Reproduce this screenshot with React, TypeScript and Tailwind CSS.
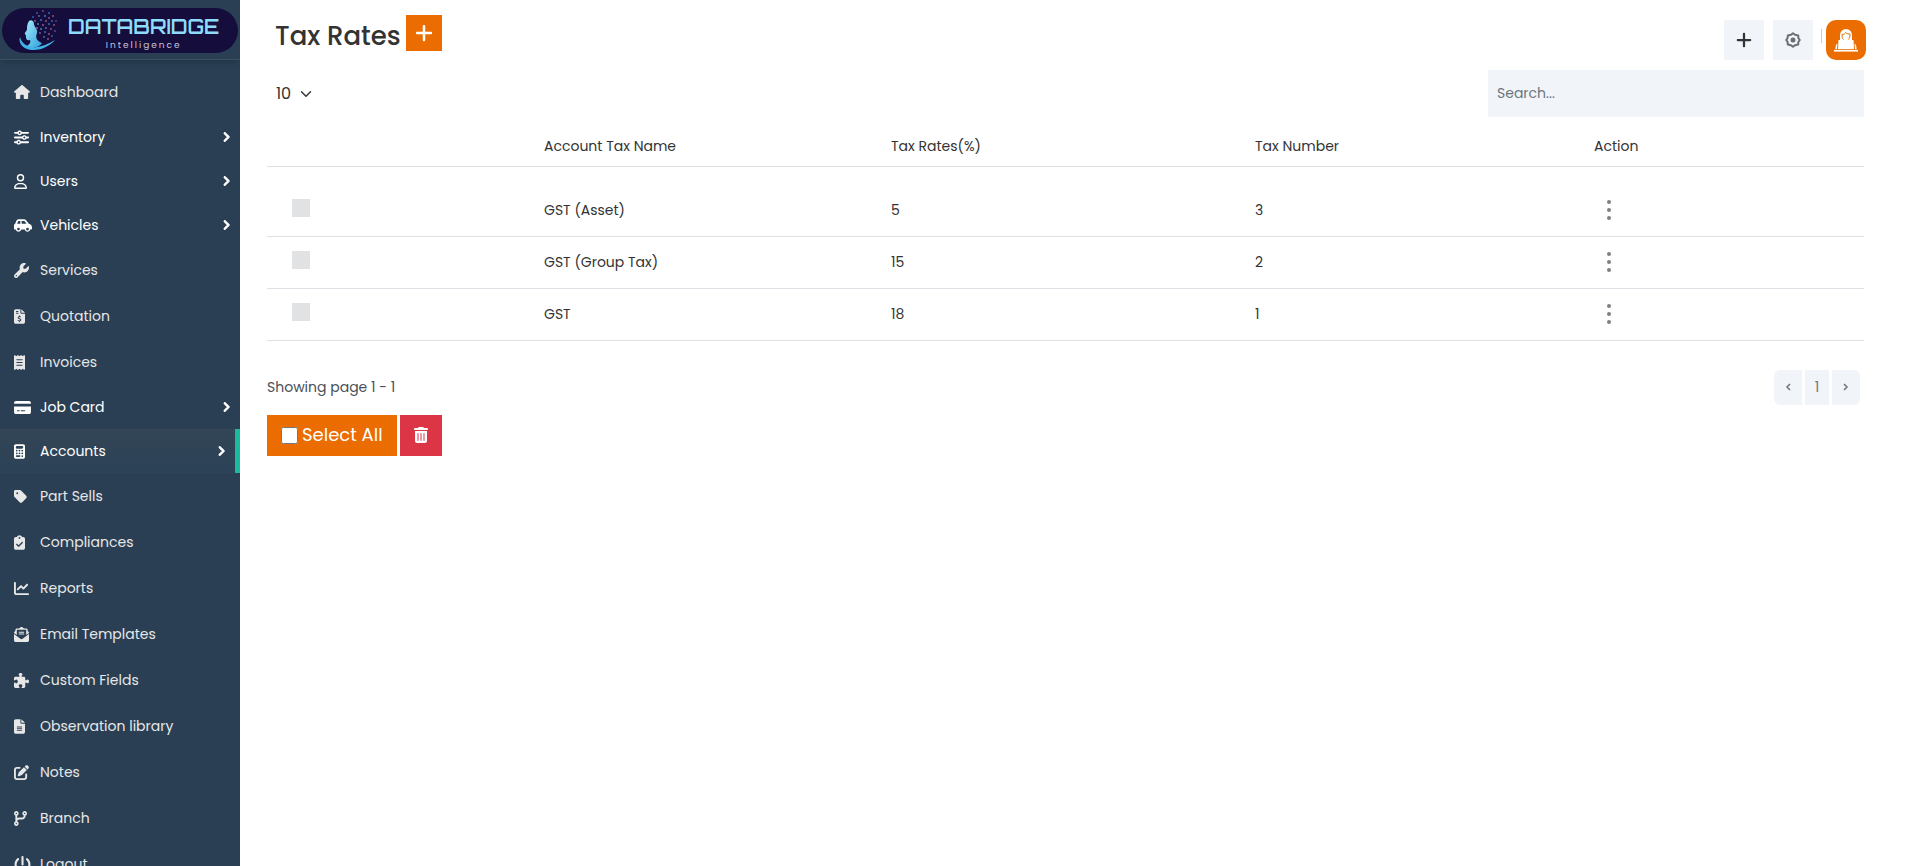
import { useState } from 'react';
import type { IconType } from 'react-icons';
import {
  FaHouse, FaSliders, FaRegUser, FaCarSide, FaWrench, FaFileInvoiceDollar, FaReceipt, FaCreditCard,
  FaCalculator, FaTag, FaClipboardCheck, FaChartLine, FaEnvelopeOpenText, FaPuzzlePiece, FaFileLines,
  FaPenToSquare, FaCodeBranch, FaPowerOff, FaChevronRight, FaPlus, FaTrashCan,
} from 'react-icons/fa6';

interface NavItem {
  label: string;
  icon: IconType;
  size: string;
  group?: boolean;
  active?: boolean;
}

const NAV: NavItem[] = [
  { label: 'Dashboard', icon: FaHouse, size: 'w-4 h-3.5' },
  { label: 'Inventory', icon: FaSliders, size: 'w-[15px] h-[15px]', group: true },
  { label: 'Users', icon: FaRegUser, size: 'w-[13px] h-[15px]', group: true },
  { label: 'Vehicles', icon: FaCarSide, size: 'w-[18px] h-[15px]', group: true },
  { label: 'Services', icon: FaWrench, size: 'w-[15px] h-[15px]' },
  { label: 'Quotation', icon: FaFileInvoiceDollar, size: 'w-[11px] h-[15px]' },
  { label: 'Invoices', icon: FaReceipt, size: 'w-[11px] h-[15px]' },
  { label: 'Job Card', icon: FaCreditCard, size: 'w-[17px] h-[15px]', group: true },
  { label: 'Accounts', icon: FaCalculator, size: 'w-[11px] h-[15px]', group: true, active: true },
  { label: 'Part Sells', icon: FaTag, size: 'w-[13px] h-[15px]' },
  { label: 'Compliances', icon: FaClipboardCheck, size: 'w-[11px] h-[15px]' },
  { label: 'Reports', icon: FaChartLine, size: 'w-[15px] h-[15px]' },
  { label: 'Email Templates', icon: FaEnvelopeOpenText, size: 'w-[15px] h-[15px]' },
  { label: 'Custom Fields', icon: FaPuzzlePiece, size: 'w-[15px] h-[15px]' },
  { label: 'Observation library', icon: FaFileLines, size: 'w-[11px] h-[15px]' },
  { label: 'Notes', icon: FaPenToSquare, size: 'w-[15px] h-[15px]' },
  { label: 'Branch', icon: FaCodeBranch, size: 'w-[13px] h-[15px]' },
  { label: 'Logout', icon: FaPowerOff, size: 'w-[17px] h-[17px]' },
];

const TAXES = [
  { name: 'GST (Asset)', rate: 5, number: 3 },
  { name: 'GST (Group Tax)', rate: 15, number: 2 },
  { name: 'GST', rate: 18, number: 1 },
];

// Scattered dots behind the head in the logo: x, y, colour
const SPARKS: [number, number, string][] = [
  [19, 3, '#3f5fa8'], [25, 1, '#7a4f9c'], [31, 3, '#3f6fc0'], [35, 6, '#b0527f'],
  [15, 7, '#3d63b5'], [21, 6, '#8a5aa8'], [27, 6, '#4d7fd0'], [31, 8, '#94508f'],
  [17, 11, '#9a5c93'], [23, 10, '#4a78c8'], [28, 11, '#a3567f'], [34, 11, '#3e63ad'],
  [20, 14, '#4c86d8'], [25, 15, '#9c5da0'], [31, 14, '#4670c0'], [36, 15, '#a04f86'],
  [19, 18, '#a0609a'], [23, 19, '#4b82cf'], [28, 18, '#5b6fc0'], [33, 19, '#974f8c'],
  [22, 23, '#8e5aa5'], [27, 22, '#3f74c8'], [31, 24, '#a8557f'], [37, 21, '#6c4a9c'],
  [26, 27, '#4a73bb'], [30, 29, '#9a5590'], [34, 26, '#4c63b0'], [38, 11, '#5c3f8c'],
];

function Logo() {
  return (
    <a href="#" className="flex h-[45px] items-center rounded-full bg-[#150d3c]">
      <svg className="ml-4 h-[42px] w-10 shrink-0" viewBox="0 0 40 42" aria-hidden="true">
        <defs>
          <linearGradient id="face" x1="0" y1="0" x2="1" y2="1">
            <stop offset="0" stopColor="#a5ecfd" />
            <stop offset="1" stopColor="#2ea0dc" />
          </linearGradient>
        </defs>
        {SPARKS.map(([x, y, c]) => (
          <circle key={`${x}-${y}`} cx={x} cy={y} r="0.9" fill={c} />
        ))}
        <path d="M11 11C9 14 9 17 9 19C9 21 6 23 7 24C8 25 8 26 8 27C8 29 9 31 12 30C13 32 12 34 9 36C15 39 22 37 24 33C19 31 17 28 19 23C20 19 16 17 16 14C16 11 13 9 11 11Z" fill="url(#face)" />
        <path d="M2 27C0 32 4 39 13 40C23 41 33 35 37 30C30 34 22 38 14 37C7 36 3 32 2 27Z" fill="#3fb4ea" />
      </svg>
      <div className="ml-2.5 flex flex-col pt-1">
        <span className="font-[Orbitron,Poppins,sans-serif] text-[20px] leading-6 font-semibold text-[#8edcfb]">DATABRIDGE</span>
        <span className="self-center font-[Poppins,sans-serif] text-[9px] leading-3 tracking-[2px] text-[#c9c4dc]">Intelligence</span>
      </div>
    </a>
  );
}

function Sidebar() {
  return (
    <aside className="h-screen w-60 shrink-0 overflow-hidden bg-[#2a3f54]">
      <div className="h-[60px] border-b border-[#3e5163] px-0.5 pt-2 shadow-md">
        <Logo />
      </div>
      <nav className="pt-[9px]">
        <ul>
          {NAV.map(({ label, icon: Icon, size, group, active }) => (
            <li key={label}>
              <a
                href="#"
                className={`flex items-center pl-3.5 text-sm ${group ? 'h-11 text-white' : 'h-[46px] text-[#e7e7e7]'} ${
                  active ? 'border-r-5 border-[#1abb9c] bg-linear-to-b from-[#334556] to-[#2c4257]' : ''
                }`}
              >
                <span className="w-[26px] shrink-0">
                  <Icon className={size} />
                </span>
                {label}
                {group && <FaChevronRight className="mr-[9px] ml-auto size-2.5" strokeWidth={60} stroke="currentColor" />}
              </a>
            </li>
          ))}
        </ul>
      </nav>
    </aside>
  );
}

function GearIcon() {
  return (
    <svg width="16" height="16" viewBox="0 0 16 16" fill="none" stroke="#6b6f74" strokeWidth="2">
      <path d="M8 1.2L10 2.8L13.2 3.4L13.4 6.2L14.8 8L13.4 9.8L13.2 12.6L10 13.2L8 14.8L6 13.2L2.8 12.6L2.6 9.8L1.2 8L2.6 6.2L2.8 3.4L6 2.8Z" strokeLinejoin="round" />
      <circle cx="8" cy="8" r="1.5" fill="#6b6f74" />
    </svg>
  );
}

function AvatarIcon() {
  return (
    <svg width="24" height="23" viewBox="0 0 24 23" fill="#fff">
      <path d="M6 11V6A6 6 0 0 1 18 6V11Z" />
      <path d="M8 5.500C10 5.500 11 4.500 11.500 3.500C12.500 4.500 14 5 16 5C16 8 15.500 9 14.500 10.500M8 5.500C8 8 8.500 9.500 9.500 10.500" fill="none" stroke="#eb6c00" />
      <path d="M4.500 11H19.500L20 20H4Z" />
      <path d="M3.500 14.500L3 20H1.500C1.500 17 2 15 3.500 14.500ZM20.500 14.500L21 20H22.500C22.500 17 22 15 20.500 14.500Z" />
      <path d="M0 20.800H24V22.600H0Z" />
    </svg>
  );
}

export default function App() {
  const [search, setSearch] = useState('');
  const [selected, setSelected] = useState<number[]>([]);

  const toggle = (n: number) =>
    setSelected((prev) => (prev.includes(n) ? prev.filter((x) => x !== n) : [...prev, n]));

  const rows = TAXES.filter((t) => t.name.toLowerCase().includes(search.toLowerCase()));

  return (
    <div className="flex h-screen overflow-hidden bg-white font-[Poppins,Inter,sans-serif] text-[#333]">
      <Sidebar />

      <main className="min-w-0 flex-1 pr-[55px] pl-[27px]">
        {/* Title bar */}
        <header className="flex h-[70px] items-start justify-between pl-2">
          <div className="flex items-start gap-[5px] pt-[15px]">
            <h1 className="pt-[3px] text-[26px] leading-9 font-medium">Tax Rates</h1>
            <button aria-label="Add tax rate" className="flex size-9 items-center justify-center bg-[#eb6c00] text-white">
              <FaPlus className="size-5" />
            </button>
          </div>
          <div className="-mr-0.5 flex items-center pt-5">
            <button aria-label="Create" className="flex size-10 items-center justify-center bg-[#f1f5fa]">
              <FaPlus className="size-[18px]" />
            </button>
            <button aria-label="Settings" className="ml-[9px] flex size-10 items-center justify-center bg-[#f1f5fa]">
              <GearIcon />
            </button>
            <span className="mb-2 ml-2 h-3.5 w-px bg-[#ccc]" />
            <button aria-label="Profile" className="ml-1 flex size-10 items-center justify-center rounded-[10px] bg-[#eb6c00]">
              <AvatarIcon />
            </button>
          </div>
        </header>

        {/* Table controls */}
        <div className="flex items-center justify-between">
          <div className="relative ml-[9px] flex items-center">
            <select aria-label="Rows per page" className="w-10 appearance-none bg-transparent text-base">
              <option>10</option>
              <option>25</option>
              <option>50</option>
            </select>
            <svg className="pointer-events-none absolute right-1 h-3 w-3" viewBox="0 0 16 16" fill="none" stroke="#343a40" strokeWidth="2" strokeLinecap="round" strokeLinejoin="round">
              <path d="m2 5 6 6 6-6" />
            </svg>
          </div>
          <input
            type="search"
            aria-label="Search"
            placeholder="Search..."
            value={search}
            onChange={(e) => setSearch(e.target.value)}
            className="h-[47px] w-[376px] bg-[#f1f5fa] px-[9px] text-sm outline-none placeholder:text-[#6c757d]"
          />
        </div>

        <table className="w-full table-fixed border-collapse text-left text-sm">
          <colgroup>
            <col className="w-[269px]" />
            <col className="w-[347px]" />
            <col className="w-[364px]" />
            <col className="w-[339px]" />
            <col className="w-[278px]" />
          </colgroup>
          <thead>
            <tr className="h-[49px] border-b border-[#dee0e6]">
              <th aria-label="Select" />
              <th className="pt-2.5 pl-2 font-normal">Account Tax Name</th>
              <th className="pt-2.5 pl-2 font-normal">Tax Rates(%)</th>
              <th className="pt-2.5 pl-2 font-normal">Tax Number</th>
              <th className="pt-2.5 pl-2 font-normal">Action</th>
            </tr>
          </thead>
          <tbody>
            <tr className="h-[18px]" aria-hidden="true" />
            {rows.map((t) => (
              <tr key={t.number} className="h-[52px] border-b border-[#dee0e6]">
                <td className="pb-1 pl-[25px]">
                  <input
                    type="checkbox"
                    aria-label={`Select ${t.name}`}
                    checked={selected.includes(t.number)}
                    onChange={() => toggle(t.number)}
                    className="block size-[18px] appearance-none bg-[#e1e2e4] checked:bg-[#eb6c00]"
                  />
                </td>
                <td className="pl-2">{t.name}</td>
                <td className="pl-2">{t.rate}</td>
                <td className="pl-2">{t.number}</td>
                <td className="pl-[19px]">
                  <button aria-label={`Actions for ${t.name}`} className="flex flex-col gap-1 p-0.5">
                    <span className="size-1 rounded-full bg-[#808080]" />
                    <span className="size-1 rounded-full bg-[#808080]" />
                    <span className="size-1 rounded-full bg-[#808080]" />
                  </button>
                </td>
              </tr>
            ))}
          </tbody>
        </table>

        {/* Pagination */}
        <div className="mt-[29px] flex items-center justify-between pr-1">
          <p className="text-sm text-[#495057]">Showing page 1 - 1</p>
          <div className="flex gap-[3px] text-sm text-[#6c757d]">
            <button aria-label="Previous page" className="flex h-[35px] w-7 items-center justify-center rounded-l-md bg-[#f1f5fa]">
              <svg width="6" height="8" viewBox="0 0 6 8" fill="none" stroke="currentColor" strokeWidth="1.500"><path d="M5 1 2 4l3 3" /></svg>
            </button>
            <button className="h-[35px] w-6 bg-[#f1f5fa]">1</button>
            <button aria-label="Next page" className="flex h-[35px] w-7 items-center justify-center rounded-r-md bg-[#f1f5fa]">
              <svg width="6" height="8" viewBox="0 0 6 8" fill="none" stroke="currentColor" strokeWidth="1.500"><path d="m1 1 3 3-3 3" /></svg>
            </button>
          </div>
        </div>

        <div className="mt-2.5 flex gap-[3px] text-white">
          <label className="flex h-[41px] items-center gap-1 bg-[#eb6c00] px-3.5 text-lg">
            <input
              type="checkbox"
              checked={selected.length === TAXES.length}
              onChange={(e) => setSelected(e.target.checked ? TAXES.map((t) => t.number) : [])}
              className="size-[17px]"
            />
            Select All
          </label>
          <button aria-label="Delete selected" className="flex h-[41px] w-[42px] items-center justify-center bg-[#dc3545]">
            <FaTrashCan className="h-4 w-auto" />
          </button>
        </div>
      </main>
    </div>
  );
}
